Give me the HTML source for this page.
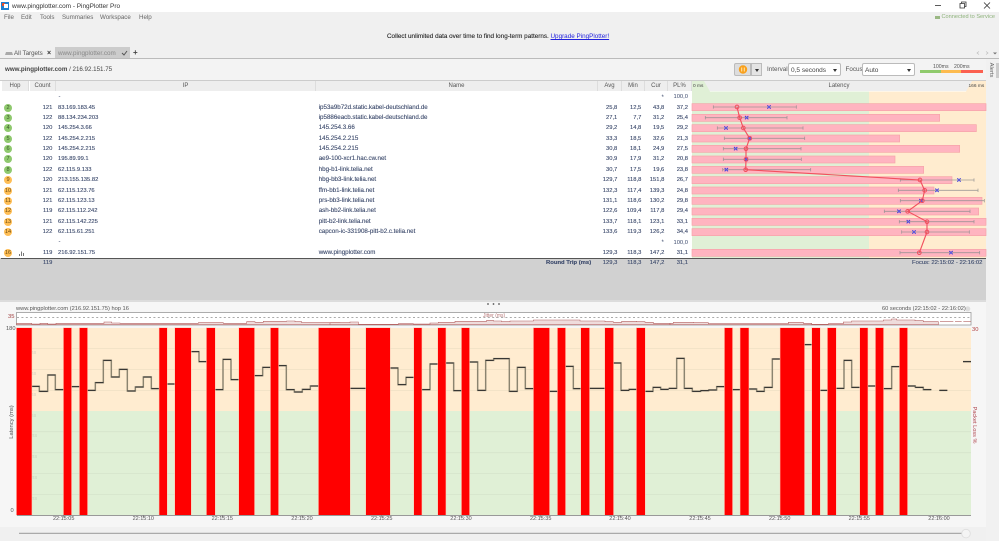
<!DOCTYPE html>
<html><head><meta charset="utf-8"><title>PingPlotter Pro</title>
<style>
html,body{margin:0;padding:0;width:999px;height:541px;overflow:hidden;background:#fff}
body{font-family:"Liberation Sans",sans-serif;font-size:6px;color:#3c4a6c;position:relative}
div,span,a{position:absolute;white-space:nowrap;line-height:10px}
.m{top:13px;color:#666;font-size:6.2px}
.h{top:81px;height:10px;background:#eee;border-right:1px solid #ddd;text-align:center;color:#555;font-size:6px;box-sizing:border-box}
.r{left:0;width:690px;height:10px;margin-top:.6px;-webkit-text-stroke:.12px #3c4a6c}
.i{left:58px;font-size:5.8px}.nm{left:318.7px;font-size:6.2px}
.ct{left:30px;width:22.3px;text-align:right;font-size:5.8px}
.a{left:595px;width:22.3px;text-align:right;font-size:5.8px}
.n{left:619px;width:22.3px;text-align:right;font-size:5.8px}
.c{left:642px;width:22.3px;text-align:right;font-size:5.8px}
.p{left:665.7px;width:22.3px;text-align:right;font-size:5.8px}
.o{left:4px;top:1px;width:8px;height:8px;border-radius:50%;text-align:center;line-height:8px;font-size:5.6px;color:#3d5a2a;-webkit-text-stroke:0}
.g{background:#8fc96e}.y{background:#ffbe55;color:#6a4a10}
.t{top:514.4px;font-size:5.5px;color:#555;width:30px;text-align:center}
.sel{top:63px;height:13px;background:#fff;border:1px solid #bbb;border-radius:2px;box-sizing:border-box;font-size:6.5px;color:#444;line-height:13px;padding-left:2px}
.sel i{position:absolute;right:3px;top:5px;border:2.2px solid transparent;border-top:3px solid #333;border-bottom:0}
.lb{top:64.5px;font-size:6.3px;color:#555}
svg{position:absolute;left:0;top:0}
</style></head><body>

<!-- window chrome -->
<div style="left:0;top:12px;width:999px;height:46px;background:#f0f0f0"></div>
<div style="left:1px;top:1.5px;width:8px;height:8px;background:#1c7fd0"></div>
<div style="left:2px;top:3px;width:3px;height:3px;background:#e05030"></div>
<div style="left:4px;top:3.5px;width:4px;height:4px;background:#fff"></div>
<div style="left:12px;top:1.5px;font-size:6.45px;color:#333">www.pingplotter.com - PingPlotter Pro</div>
<span class="m" style="left:4px">File</span><span class="m" style="left:21px">Edit</span><span class="m" style="left:40px">Tools</span><span class="m" style="left:62px">Summaries</span><span class="m" style="left:100px">Workspace</span><span class="m" style="left:139px">Help</span>
<div style="left:387px;top:32.4px;font-size:6.32px;color:#222;-webkit-text-stroke:.1px #222">Collect unlimited data over time to find long-term patterns. <a style="position:static;color:#2222dd;text-decoration:underline;-webkit-text-stroke:0">Upgrade PingPlotter!</a></div>
<div style="left:934.5px;top:15.5px;width:5px;height:3px;background:#9ab884"></div>
<div style="left:941.5px;top:12.4px;font-size:5.6px;color:#8db27a">Connected to Service</div>
<div style="left:55px;top:47px;width:75px;height:11px;background:#ccc"></div>
<div style="left:14px;top:49px;font-size:6.2px;color:#555">All Targets</div>
<div style="left:58px;top:49px;font-size:6.3px;color:#888">www.pingplotter.com</div>
<div style="left:47px;top:49px;font-size:7px;font-weight:bold;color:#333">×</div>
<div style="left:133px;top:48px;font-size:8px;font-weight:bold;color:#444">+</div>
<div style="left:0;top:58px;width:999px;height:1px;background:#bbb"></div>
<!-- target bar -->
<div style="left:0;top:59px;width:999px;height:22px;background:#f3f3f3"></div>
<div style="left:0;top:79.5px;width:986px;height:1.5px;background:#ccc"></div>
<div style="left:5px;top:65.4px;font-size:6.2px;color:#444"><b>www.pingplotter.com</b> / 216.92.151.75</div>
<div style="left:734px;top:63px;width:17px;height:13px;background:#ddd;border:1px solid #bbb;box-sizing:border-box;border-radius:2px 0 0 2px"></div>
<div style="left:751px;top:63px;width:11px;height:13px;background:#e4e4e4;border:1px solid #bbb;box-sizing:border-box"></div>
<div style="left:754.5px;top:68.5px;border:2.2px solid transparent;border-top:3px solid #333;border-bottom:0"></div>
<span class="lb" style="left:767px">Interval</span>
<div class="sel" style="left:788px;width:53px">0,5 seconds<i></i></div>
<span class="lb" style="left:845.5px">Focus</span>
<div class="sel" style="left:862px;width:53px">Auto<i></i></div>
<span style="left:933px;top:62px;font-size:5.2px;color:#555">100ms</span><span style="left:954px;top:62px;font-size:5.2px;color:#555">200ms</span>
<div style="left:919.5px;top:70px;width:21px;height:3.4px;background:#8fca6c"></div>
<div style="left:940.5px;top:70px;width:20.5px;height:3.4px;background:#fdbb4f"></div>
<div style="left:961px;top:70px;width:21.5px;height:3.4px;background:#fb6050"></div>
<div style="left:986px;top:59px;width:13px;height:482px;background:#f1f1f1"></div>
<div style="left:983px;top:65px;font-size:5.8px;color:#666;transform:rotate(90deg);width:16px;text-align:center">Alerts</div>
<div style="left:996px;top:63px;width:3px;height:15px;background:#ccc"></div>

<!-- header -->
<div class="h" style="left:2px;width:27px">Hop</div>
<div class="h" style="left:30px;width:26px">Count</div>
<div class="h" style="left:56px;width:260px">IP</div>
<div class="h" style="left:316px;width:282px">Name</div>
<div class="h" style="left:598px;width:24px">Avg</div>
<div class="h" style="left:622px;width:23px">Min</div>
<div class="h" style="left:645px;width:23px">Cur</div>
<div class="h" style="left:668px;width:24px">PL%</div>
<div class="h" style="left:692px;width:294px;border:0">Latency</div>

<!-- gray region -->
<div style="left:0;top:258px;width:986px;height:44px;background:#d1d1d1"></div>
<div style="left:1px;top:258px;width:985px;height:1px;background:#555"></div>
<!-- lower panel -->
<div style="left:0;top:302px;width:986px;height:239px;background:#f6f6f6"></div>
<div style="left:0;top:527px;width:986px;height:14px;background:#f0f0f0"></div>

<svg width="999" height="541" viewBox="0 0 999 541">
<defs>
<g id="x"><path d="M-5-5L5 5M-5 5L5-5" stroke="#3434d8" stroke-width="3" fill="none"/><rect x="-3" y="-3" width="6" height="6" fill="#7070e8" opacity=".6"/></g>
<path id="o" d="M0-5.5A5.5 5.5 0 1 1 0 5.5A5.5 5.5 0 1 1 0-5.5Z" fill="none" stroke="#f04d5c" stroke-width="3"/>
</defs>
<!-- tab triangles header -->
<path d="M692 81H704L710 91.5H692Z" fill="#e0f0d6"/>
<path d="M986 81H972L966 91.5H986Z" fill="#ffeccf"/>
<!-- window icons -->
<path d="M935 5.5H941" stroke="#333" stroke-width=".8"/>
<path d="M960 3.5H964.5V8H960ZM961.5 3.5V2H966V6.5H964.5" stroke="#333" stroke-width=".8" fill="none"/>
<path d="M984 2.5L990 8.5M990 2.5L984 8.5" stroke="#333" stroke-width=".8"/>
<path d="M979 51.5L977 53L979 54.5M986 51.5L988 53L986 54.5" stroke="#bbb" stroke-width=".7" fill="none"/>
<path d="M993 52.5H997L995 54.5Z" fill="#777"/>
<path d="M5 55H13L12 52H6Z" fill="#aaa"/>
<path d="M122 53L124 55L127 51" stroke="#555" stroke-width="1" fill="none"/>
<circle cx="743" cy="69.5" r="4.2" fill="#f9a01b"/><path d="M741.7 67.5v4M744.3 67.5v4" stroke="#ffe6b0" stroke-width="1"/>
<!-- latency backgrounds -->
<rect x="692" y="91.5" width="177" height="166.5" fill="#e0f0d6"/>
<rect x="869" y="91.5" width="117" height="166.5" fill="#ffeccf"/>
<!-- latency graph -->
<g transform="translate(670,0) scale(.33333)">
<g fill="#ffb4c0" stroke="#f6a3a8" stroke-width="2">
<rect x="66" y="311" width="882" height="21"/>
<rect x="66" y="343" width="743" height="21"/>
<rect x="66" y="374" width="853" height="21"/>
<rect x="66" y="405" width="623" height="21"/>
<rect x="66" y="436" width="803" height="21"/>
<rect x="66" y="468" width="609" height="21"/>
<rect x="66" y="499" width="695" height="21"/>
<rect x="66" y="530" width="780" height="21"/>
<rect x="66" y="561" width="726" height="21"/>
<rect x="66" y="592" width="870" height="21"/>
<rect x="66" y="624" width="860" height="21"/>
<rect x="66" y="655" width="882" height="21"/>
<rect x="66" y="686" width="882" height="21"/>
<rect x="66" y="748" width="882" height="21"/>
</g>
<path d="M130 321H379M130 316v10M379 316v10M106 353H351M106 348v10M351 348v10M142 384H399M142 379v10M399 379v10M163 415H404M163 410v10M404 410v10M160 446H393M160 441v10M393 441v10M160 478H394M160 473v10M394 473v10M158 509H422M158 504v10M422 504v10M691 540H912M691 535v10M912 535v10M685 571H924M685 566v10M924 566v10M691 602H943M691 597v10M943 597v10M643 634H900M643 629v10M900 629v10M688 665H912M688 660v10M912 660v10M695 696H898M695 691v10M898 691v10M690 758H929M690 753v10M929 753v10" stroke="#8f8f8f" stroke-width="2.4" fill="none" opacity=".85"/>
<path d="M201 321L209 353L220 384L239 415L228 446L228 478L227 509L750 540L764 571L757 602L713 634L771 665L771 696L748 758" fill="none" stroke="#f2505e" stroke-width="3.4"/>
<g>
<use href="#x" x="297" y="321"/><use href="#x" x="230" y="353"/><use href="#x" x="168" y="384"/><use href="#x" x="239" y="415"/><use href="#x" x="197" y="446"/><use href="#x" x="229" y="478"/><use href="#x" x="169" y="509"/><use href="#x" x="867" y="540"/><use href="#x" x="801" y="571"/><use href="#x" x="753" y="602"/><use href="#x" x="687" y="634"/><use href="#x" x="715" y="665"/><use href="#x" x="732" y="696"/><use href="#x" x="843" y="758"/>
<use href="#o" x="201" y="321"/><use href="#o" x="209" y="353"/><use href="#o" x="220" y="384"/><use href="#o" x="239" y="415"/><use href="#o" x="228" y="446"/><use href="#o" x="228" y="478"/><use href="#o" x="227" y="509"/><use href="#o" x="750" y="540"/><use href="#o" x="764" y="571"/><use href="#o" x="757" y="602"/><use href="#o" x="713" y="634"/><use href="#o" x="771" y="665"/><use href="#o" x="771" y="696"/><use href="#o" x="748" y="758"/>
</g>
</g>
<!-- hop16 icon -->
<path d="M19.5 256v-2M21.5 256v-4.5M23.5 256v-3" stroke="#777" stroke-width="1"/>

<!-- dots -->
<circle cx="488" cy="304" r=".9" fill="#555"/><circle cx="493.5" cy="304" r=".9" fill="#555"/><circle cx="499" cy="304" r=".9" fill="#555"/>
<path d="M0 301H986" stroke="#dcdcdc" stroke-width="2"/>

<!-- jitter box -->
<rect x="16.5" y="312.5" width="954.5" height="12.5" fill="#fff" stroke="#999" stroke-width=".8"/>
<path d="M17 317.3H971" stroke="#777" stroke-width=".6" stroke-dasharray="2 2.4"/>
<g fill="#efdcdc" stroke="#b56565" stroke-width="1.8">
<path transform="translate(0,300) scale(.33333)" d="M50 74V70H95V72H120V70H143V72H168V70H312V66H335V69H360V70H595V68H670V70H740V65H765V67H790V64H860V63H885V65H905V68H1020V74Z"/>
<path transform="translate(330,300) scale(.33333)" d="M0 74V68H60V66H85V73H205V71H250V72H300V69H325V67H375V64H470V61H490V63H515V65H540V63H610V60H750V63H825V65H850V67H875V64H920V65H945V67H970V70H1020V74Z"/>
<path transform="translate(660,300) scale(.33333)" d="M30 74V70H40V67H100V68H145V71H385V67H430V70H455V73H505V71H550V66H575V63H670V60H695V57H710V60H765V62H790V65H835V74Z"/>
<path transform="translate(660,300) scale(.33333)" d="M840 65H880M885 65H905M910 65H933" fill="none"/>
</g>

<!-- main chart -->
<rect x="17" y="328" width="954" height="83" fill="#ffecd0"/>
<rect x="17" y="411" width="954" height="104" fill="#e0f0d6"/>
<path d="M17 348.5H971M17 369.5H971M17 390.5H971" stroke="#f0dfc4" stroke-width=".8"/>
<path d="M17 431.7H971M17 452.7H971M17 473.5H971M17 494.5H971" stroke="#d5e4cb" stroke-width=".8"/>
<g font-family="Liberation Sans" font-size="5.6" fill="#d8cfc0">
<text x="18" y="354">160 ms</text><text x="18" y="375">140 ms</text><text x="18" y="396">120 ms</text><text x="18" y="417" fill="#c9d6c0">100 ms</text><text x="22" y="437" fill="#c9d6c0">80 ms</text><text x="22" y="458" fill="#c9d6c0">60 ms</text><text x="22" y="479" fill="#c9d6c0">40 ms</text><text x="22" y="500" fill="#c9d6c0">20 ms</text>
</g>
<!-- step line -->
<g fill="none">
<g stroke="#8b8470" stroke-width="4.4">
<path transform="translate(0,300) scale(.33333)" d="M95 259H118V274H143V225H166V269H191M214 260H239M262 271H286V248H310V181H334V231H358V208H382V273H406V261H430V231H454V266H478M501 252H525M573 155H597V185H620M645 269H669V178H693V239H717M763 227H788V202H812M835 197H859V269H883V276H907V268H931V258H956"/>
<path transform="translate(330,300) scale(.33333)" d="M61 265H108M180 204H204V254H228V232H252M275 269H300V192H324M347 189H371V272H395M418 186H443V271H467V181H491V176H538V274H562V202H586V266H611M658 274H683M706 199H730V266H753M778 265H825M850 189H873V271H897V268H920M945 274H969V262H992V268H1016"/>
<path transform="translate(660,300) scale(.33333)" d="M26 265H50V175H73V265H97V274H122V272H146V270H170V260H194M217 269H241M266 267H290V274H313V262H337V177H361M433 134H456M480 271H503M528 265H552V181H575V262H600M623 258H647M670 266H695V200H719M742 258H766V262H790V269H814M838 271H862M909 185H933"/>
</g>
<g stroke="#2c2c2c" stroke-width="3">
<path transform="translate(0,300) scale(.33333)" d="M95 259H118M118 274H143M143 225H166M166 269H191M214 260H239M262 271H286M286 248H310M310 181H334M334 231H358M358 208H382M382 273H406M406 261H430M430 231H454M454 266H478M501 252H525M573 155H597M597 185H620M645 269H669M669 178H693M693 239H717M763 227H788M788 202H812M835 197H859M859 269H883M883 276H907M907 268H931M931 258H956"/>
<path transform="translate(330,300) scale(.33333)" d="M61 265H108M180 204H204M204 254H228M228 232H252M275 269H300M300 192H324M347 189H371M371 272H395M418 186H443M443 271H467M467 181H491M491 176H538M538 274H562M562 202H586M586 266H611M658 274H683M706 199H730M730 266H753M778 265H825M850 189H873M873 271H897M897 268H920M945 274H969M969 262H992M992 268H1016"/>
<path transform="translate(660,300) scale(.33333)" d="M26 265H50M50 175H73M73 265H97M97 274H122M122 272H146M146 270H170M170 260H194M217 269H241M266 267H290M290 274H313M313 262H337M337 177H361M433 134H456M480 271H503M528 265H552M552 181H575M575 262H600M623 258H647M670 266H695M695 200H719M742 258H766M766 262H790M790 269H814M838 271H862M909 185H933"/>
</g>
</g>
<!-- red bars -->
<g fill="#ff0000" stroke="#ffc4b0" stroke-width="3" style="paint-order:stroke">
<g transform="translate(0,300) scale(.33333)">
<rect x="50" y="84" width="45" height="561"/><rect x="191" y="84" width="23" height="561"/><rect x="239" y="84" width="23" height="561"/><rect x="478" y="84" width="23" height="561"/><rect x="525" y="84" width="48" height="561"/><rect x="620" y="84" width="25" height="561"/><rect x="717" y="84" width="46" height="561"/><rect x="812" y="84" width="23" height="561"/><rect x="956" y="84" width="94" height="561"/>
</g>
<g transform="translate(330,300) scale(.33333)">
<rect x="108" y="84" width="72" height="561"/><rect x="252" y="84" width="23" height="561"/><rect x="324" y="84" width="23" height="561"/><rect x="395" y="84" width="23" height="561"/><rect x="611" y="84" width="47" height="561"/><rect x="683" y="84" width="23" height="561"/><rect x="753" y="84" width="25" height="561"/><rect x="825" y="84" width="25" height="561"/><rect x="920" y="84" width="25" height="561"/>
</g>
<g transform="translate(660,300) scale(.33333)">
<rect x="194" y="84" width="23" height="561"/><rect x="241" y="84" width="25" height="561"/><rect x="361" y="84" width="72" height="561"/><rect x="456" y="84" width="24" height="561"/><rect x="503" y="84" width="25" height="561"/><rect x="600" y="84" width="23" height="561"/><rect x="647" y="84" width="23" height="561"/><rect x="719" y="84" width="23" height="561"/>
</g>
</g>
<path d="M17 515.5H971" stroke="#999" stroke-width="1"/>
<path d="M63.7 515v2.5M143.3 515v2.5M222.3 515v2.5M302 515v2.5M381.7 515v2.5M461 515v2.5M540.7 515v2.5M620 515v2.5M700 515v2.5M779.7 515v2.5M859.3 515v2.5M939 515v2.5" stroke="#777" stroke-width=".7"/>
<!-- slider -->
<path d="M19 533.4H966" stroke="#aaa" stroke-width="1.2"/>
<circle cx="966" cy="533.6" r="4.3" fill="#f4f4f4" stroke="#ddd" stroke-width=".8"/>
<circle cx="967.7" cy="308.8" r="2.6" fill="#ddd"/>
</svg>

<div style="left:693px;top:81.5px;font-size:4.8px;color:#444">0 ms</div>
<div style="left:968.5px;top:81.5px;font-size:4.8px;color:#444">166 ms</div>

<!-- rows -->
<span style="left:58.5px;top:92px;font-size:6px">-</span><span style="left:661.5px;top:93px;font-size:6px">*</span><span class="p" style="top:92.2px">100,0</span>
<div class="r" style="top:102px"><span class="o g">2</span><span class="ct">121</span><span class="i">83.169.183.45</span><span class="nm">ip53a9b72d.static.kabel-deutschland.de</span><span class="a">25,8</span><span class="n">12,5</span><span class="c">43,8</span><span class="p">37,2</span></div>
<div class="r" style="top:112.4px"><span class="o g">3</span><span class="ct">122</span><span class="i">88.134.234.203</span><span class="nm">ip5886eacb.static.kabel-deutschland.de</span><span class="a">27,1</span><span class="n">7,7</span><span class="c">31,2</span><span class="p">25,4</span></div>
<div class="r" style="top:122.8px"><span class="o g">4</span><span class="ct">120</span><span class="i">145.254.3.66</span><span class="nm">145.254.3.66</span><span class="a">29,2</span><span class="n">14,8</span><span class="c">19,5</span><span class="p">29,2</span></div>
<div class="r" style="top:133.2px"><span class="o g">5</span><span class="ct">122</span><span class="i">145.254.2.215</span><span class="nm">145.254.2.215</span><span class="a">33,3</span><span class="n">18,5</span><span class="c">32,6</span><span class="p">21,3</span></div>
<div class="r" style="top:143.5px"><span class="o g">6</span><span class="ct">120</span><span class="i">145.254.2.215</span><span class="nm">145.254.2.215</span><span class="a">30,8</span><span class="n">18,1</span><span class="c">24,9</span><span class="p">27,5</span></div>
<div class="r" style="top:153.9px"><span class="o g">7</span><span class="ct">120</span><span class="i">195.89.99.1</span><span class="nm">ae9-100-xcr1.hac.cw.net</span><span class="a">30,9</span><span class="n">17,9</span><span class="c">31,2</span><span class="p">20,8</span></div>
<div class="r" style="top:164.3px"><span class="o g">8</span><span class="ct">122</span><span class="i">62.115.9.133</span><span class="nm">hbg-b1-link.telia.net</span><span class="a">30,7</span><span class="n">17,5</span><span class="c">19,6</span><span class="p">23,8</span></div>
<div class="r" style="top:174.7px"><span class="o y">9</span><span class="ct">120</span><span class="i">213.155.135.82</span><span class="nm">hbg-bb3-link.telia.net</span><span class="a">129,7</span><span class="n">118,8</span><span class="c">151,8</span><span class="p">26,7</span></div>
<div class="r" style="top:185px"><span class="o y">10</span><span class="ct">121</span><span class="i">62.115.123.76</span><span class="nm">ffm-bb1-link.telia.net</span><span class="a">132,3</span><span class="n">117,4</span><span class="c">139,3</span><span class="p">24,8</span></div>
<div class="r" style="top:195.4px"><span class="o y">11</span><span class="ct">121</span><span class="i">62.115.123.13</span><span class="nm">prs-bb3-link.telia.net</span><span class="a">131,1</span><span class="n">118,6</span><span class="c">130,2</span><span class="p">29,8</span></div>
<div class="r" style="top:205.8px"><span class="o y">12</span><span class="ct">119</span><span class="i">62.115.112.242</span><span class="nm">ash-bb2-link.telia.net</span><span class="a">122,6</span><span class="n">109,4</span><span class="c">117,8</span><span class="p">29,4</span></div>
<div class="r" style="top:216.2px"><span class="o y">13</span><span class="ct">121</span><span class="i">62.115.142.225</span><span class="nm">pitt-b2-link.telia.net</span><span class="a">133,7</span><span class="n">118,1</span><span class="c">123,1</span><span class="p">33,1</span></div>
<div class="r" style="top:226.5px"><span class="o y">14</span><span class="ct">122</span><span class="i">62.115.61.251</span><span class="nm">capcon-ic-331908-pitt-b2.c.telia.net</span><span class="a">133,6</span><span class="n">119,3</span><span class="c">126,2</span><span class="p">34,4</span></div>
<span style="left:58.5px;top:237px;font-size:6px">-</span><span style="left:661.5px;top:238px;font-size:6px">*</span><span class="p" style="top:237.5px">100,0</span>
<div class="r" style="top:247.6px"><span class="o y">16</span><span class="ct">119</span><span class="i">216.92.151.75</span><span class="nm">www.pingplotter.com</span><span class="a">129,3</span><span class="n">118,3</span><span class="c">147,2</span><span class="p">31,1</span></div>
<div class="r" style="top:257.7px"><span class="ct">119</span><span style="left:546px;font-size:5.9px;font-weight:bold">Round Trip (ms)</span><span class="a">129,3</span><span class="n">118,3</span><span class="c">147,2</span><span class="p">31,1</span></div>
<div style="left:912px;top:258.2px;font-size:5.9px;-webkit-text-stroke:.12px #3c4a6c">Focus: 22:15:02 - 22:16:02</div>

<!-- lower labels -->
<div style="left:16px;top:304px;font-size:5.7px;color:#555">www.pingplotter.com (216.92.151.75) hop 16</div>
<div style="left:882px;top:304px;font-size:5.7px;color:#555">60 seconds (22:15:02 - 22:16:02)</div>
<div style="left:483px;top:310.5px;font-size:5px;color:#b87878">Jitter (ms)</div>
<div style="left:8px;top:312px;font-size:5.8px;color:#a04040">35</div>
<div style="left:6px;top:324px;font-size:5.7px;color:#555">180</div>
<div style="left:10.5px;top:506px;font-size:5.7px;color:#555">0</div>
<div style="left:-8px;top:417px;width:40px;text-align:center;font-size:5.8px;color:#555;transform:rotate(-90deg)">Latency (ms)</div>
<div style="left:972px;top:325px;font-size:5.8px;color:#b04040">30</div>
<div style="left:954px;top:420px;width:40px;text-align:center;font-size:5.6px;color:#b04850;transform:rotate(90deg)">Packet Loss %</div>
<span class="t" style="left:48.7px">22:15:05</span><span class="t" style="left:128.3px">22:15:10</span><span class="t" style="left:207.3px">22:15:15</span><span class="t" style="left:287px">22:15:20</span><span class="t" style="left:366.7px">22:15:25</span><span class="t" style="left:446px">22:15:30</span><span class="t" style="left:525.7px">22:15:35</span><span class="t" style="left:605px">22:15:40</span><span class="t" style="left:685px">22:15:45</span><span class="t" style="left:764.7px">22:15:50</span><span class="t" style="left:844.3px">22:15:55</span><span class="t" style="left:924px">22:16:00</span>
</body></html>
